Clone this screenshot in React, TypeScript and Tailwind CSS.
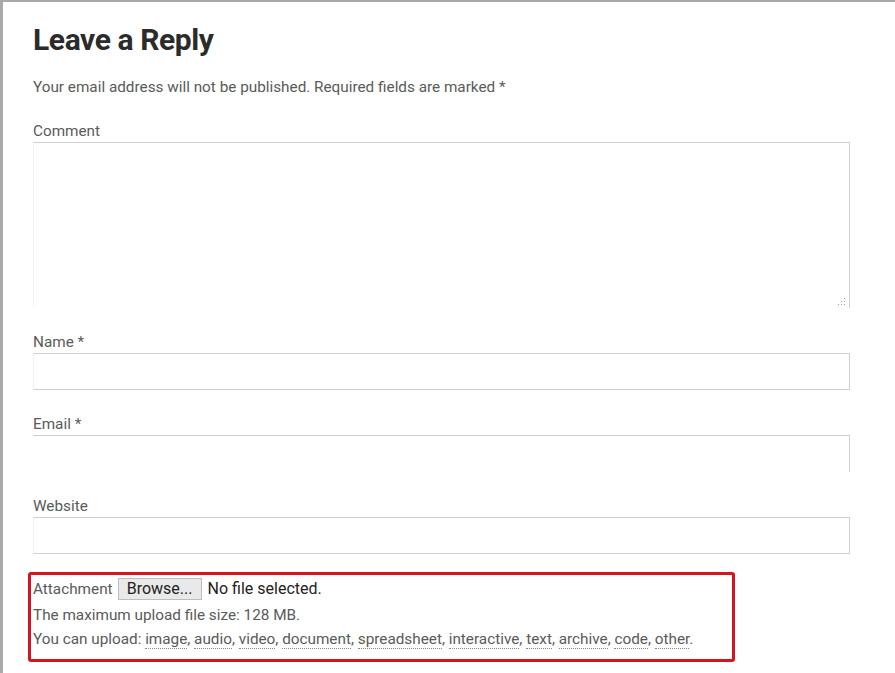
import React from "react";

const types = ["image", "audio", "video", "document", "spreadsheet", "interactive", "text", "archive", "code", "other"];

export default function App() {
  return (
    <div className="w-[895px] h-[673px] bg-white border-l-[3px] border-t-2 border-[#a9a9a9] overflow-hidden" style={{ fontFamily: "Roboto, 'Liberation Sans', sans-serif" }}>
      <div className="pl-[30px] w-[847px]">
        <h3 className="text-[30px] leading-[36px] font-bold text-[#2b2b2b] mt-[20px] tracking-[-0.4px]">Leave a Reply</h3>
        <p className="text-[15.3px] leading-[22px] text-[#5a5a5a] mt-[18px]">Your email address will not be published. Required fields are marked *</p>

        <label className="block text-[15.3px] leading-[22px] text-[#5a5a5a] mt-[22px]">Comment</label>
        <div className="h-[166px] border-t border-r border-[#cfcfcf] border-l border-l-[#f4f4f4] relative">
          <svg className="absolute right-[3px] bottom-[2px]" width="9" height="9" viewBox="0 0 9 9">
            <rect x="7" y="1" width="1" height="1" fill="#999" />
            <rect x="7" y="4" width="1" height="1" fill="#999" />
            <rect x="4" y="4" width="1" height="1" fill="#999" />
            <rect x="7" y="7" width="1" height="1" fill="#999" />
            <rect x="4" y="7" width="1" height="1" fill="#999" />
            <rect x="1" y="7" width="1" height="1" fill="#999" />
          </svg>
        </div>

        <label className="block text-[15.3px] leading-[22px] text-[#5a5a5a] mt-[23px]">Name *</label>
        <div className="h-[37px] border border-[#cfcfcf] border-l-[#f0f0f0]" />

        <label className="block text-[15.3px] leading-[22px] text-[#5a5a5a] mt-[23px]">Email *</label>
        <div className="h-[37px] border-t border-r border-[#cfcfcf]" />

        <label className="block text-[15.3px] leading-[22px] text-[#5a5a5a] mt-[23px]">Website</label>
        <div className="h-[37px] border border-[#cfcfcf] border-l-[#f0f0f0]" />
      </div>

      <div className="ml-[25px] mt-[18px] w-[707px] h-[90px] border-[3px] border-[#d7141c] rounded-[3px] pl-[2px] pt-[3px] text-[15.3px] text-[#5a5a5a]">
        <div className="flex items-center h-[22px]">
          <span className="leading-[22px]">Attachment</span>
          <span className="ml-[5px] h-[22px] w-[84px] border border-[#bdbdbd] bg-[#e9e9e9] text-[#222] text-[16px] flex items-center justify-center">Browse...</span>
          <span className="ml-[6px] text-[16px] text-[#222]">No file selected.</span>
        </div>
        <p className="leading-[24px] mt-[3px]">The maximum upload file size: 128 MB.</p>
        <p className="leading-[24px]">
          You can upload:{" "}
          {types.map((t, i) => (
            <React.Fragment key={t}>
              <span className="border-b border-dotted border-[#888]">{t}</span>
              {i < types.length - 1 ? ", " : "."}
            </React.Fragment>
          ))}
        </p>
      </div>
    </div>
  );
}
